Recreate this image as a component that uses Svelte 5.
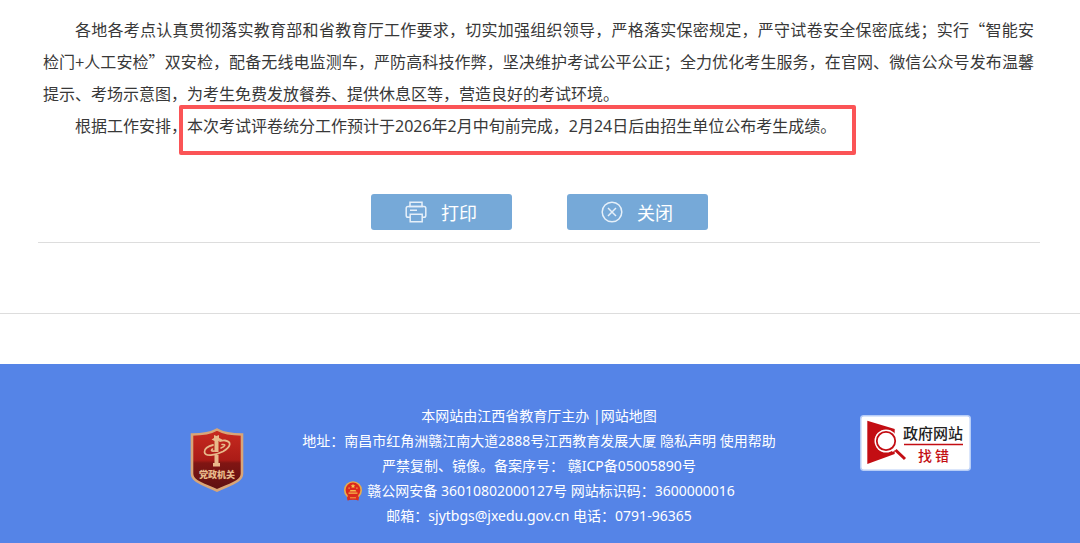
<script>
  const contacts = [
    '地址：南昌市红角洲赣江南大道2888号江西教育发展大厦 ',
    '严禁复制、镜像。备案序号： ',
  ];

  function printPage() {
    window.print();
  }

  function closePage() {
    window.close();
  }
</script>

<main class="article">
  <div class="article-text">
    <p>
      各地各考点认真贯彻落实教育部和省教育厅工作要求，切实加强组织领导，严格落实保密规定，严守试卷安全保密底线；实行“智能安检门+人工安检”双安检，配备无线电监测车，严防高科技作弊，坚决维护考试公平公正；全力优化考生服务，在官网、微信公众号发布温馨提示、考场示意图，为考生免费发放餐券、提供休息区等，营造良好的考试环境。
    </p>
    <p>
      根据工作安排，<span class="marked">本次考试评卷统分工作预计于2026年2月中旬前完成，2月24日后由招生单位公布考生成绩。</span>
    </p>
  </div>

  <div class="actions">
    <button type="button" onclick={printPage}>
      <svg viewBox="0 0 22 22" width="22" height="22" aria-hidden="true">
        <path d="M5 5.500V1.200h12v4.300M5 16.200H3a1.800 1.800 0 0 1-1.800-1.800V7.300A1.800 1.800 0 0 1 3 5.500h16a1.800 1.800 0 0 1 1.800 1.800v7.100a1.800 1.800 0 0 1-1.800 1.800h-2" />
        <path d="M4 5.500h14M5.200 13.200h12v7.600h-12zM5 9.300h7" />
      </svg>
      打印
    </button>
    <button type="button" onclick={closePage}>
      <svg viewBox="0 0 22 22" width="22" height="22" aria-hidden="true">
        <circle cx="11" cy="11" r="9.800" />
        <path d="M7 7l8 8M15 7l-8 8" />
      </svg>
      关闭
    </button>
  </div>
</main>

<hr />

<footer>
  <a class="emblem" href="#organ" aria-label="党政机关">
    <svg viewBox="0 0 54 64" width="54" height="64">
      <defs>
        <linearGradient id="shield" x1="0" y1="0" x2="0" y2="1">
          <stop offset="0" stop-color="#c92a20" />
          <stop offset="0.5" stop-color="#ab1c17" />
          <stop offset="0.55" stop-color="#801513" />
          <stop offset="1" stop-color="#5c1011" />
        </linearGradient>
      </defs>
      <path
        d="M27 1.500C21 5 12 6.500 2 6.500v39C2 54 15 56.500 27 62.500 39 56.500 52 54 52 45.500v-39C42 6.500 33 5 27 1.500z"
        fill="url(#shield)"
        stroke="#d9a577"
        stroke-width="2.600"
      />
      <path d="M24 7l2.500 1L29 7v3l3.500 1.500-4 1.500v11h-4V13l-3-1.500L24 10z" fill="#e8b98b" />
      <path d="M24.500 27h4v8h1.500v3.500h-7V35h1.500z" fill="#e8b98b" />
      <path
        d="M23 17c-5 1-9 4-8.500 7 .5 5 10.500 3.500 18.500-.5 8-4.500 9-10 2-11-2-.2-3.500.2-5 .5"
        fill="none"
        stroke="#e8b98b"
        stroke-width="1.800"
        stroke-linecap="round"
      />
      <path
        d="M22.500 21c-2 1.500-1 2.500 2 2M31 20c4-1.500 5.500-4 1-3.500"
        fill="none"
        stroke="#e8b98b"
        stroke-width="1.600"
        stroke-linecap="round"
      />
      <text x="27" y="50" text-anchor="middle" font-size="9" font-weight="900" fill="#e8b98b">党政机关</text>
    </svg>
  </a>

  <address>
    <p>本网站由江西省教育厅主办 |<a href="#map">网站地图</a></p>
    <p>{contacts[0]}<a href="#privacy">隐私声明</a> <a href="#help">使用帮助</a></p>
    <p>{contacts[1]}<a href="#icp">赣ICP备05005890号</a></p>
    <p class="police">
      <svg viewBox="0 0 20 20" width="20" height="20" aria-hidden="true">
        <path d="M3.500 13h13l-1 6.500-3-.8h-5l-3 .8z" fill="#dc2d1e" />
        <circle cx="10" cy="9.200" r="9" fill="#e8ad4b" />
        <circle cx="10" cy="9" r="7.400" fill="#dc281c" />
        <path d="M10 2.700l.7 1.500 1.600.2-1.200 1.100.3 1.600-1.400-.8-1.400.8.3-1.600-1.200-1.100 1.600-.2z" fill="#f6c54f" />
        <path d="M5.500 6.500h1.200v1.200H5.500zM13.300 6.500h1.200v1.200h-1.200zM7.500 9h5l1 1.500h-7zM5.500 11.500h9v1.200h-9z" fill="#f6b94a" />
        <path d="M4.500 14.500c3 1.500 8 1.500 11 0l-.6 4.800-2.400-.8h-5l-2.400.8z" fill="#dc2d1e" />
        <path d="M7 16.300h6v1H7z" fill="#f3a63e" />
      </svg>
      <span><a href="#police">赣公网安备 36010802000127号</a> 网站标识码：3600000016</span>
    </p>
    <p>邮箱：sjytbgs@jxedu.gov.cn 电话：0791-96365</p>
  </address>

  <a class="report" href="#report" aria-label="政府网站找错">
    <svg viewBox="0 0 111 56" width="111" height="56">
      <rect x="0.750" y="0.750" width="109.500" height="54.500" rx="3" fill="#fff" stroke="#b7cdf7" stroke-width="1.500" />
      <path d="M7.300 5.700L34.700 14v25L7.300 49z" fill="#c30d13" />
      <circle cx="26" cy="26" r="11.500" fill="#fff" />
      <path d="M32 32l3 3" stroke="#fff" stroke-width="6" />
      <circle cx="26" cy="26" r="9.200" fill="none" stroke="#c30d13" stroke-width="1.800" />
      <path d="M35.500 35l9.500 9" stroke="#c30d13" stroke-width="3" />
      <path d="M44 29.500h59" stroke="#c30d13" stroke-width="1.300" />
      <text x="43" y="24" font-size="15" font-weight="500" fill="#222">政府网站</text>
      <text x="58" y="46" font-size="14" font-weight="500" fill="#c30d13">找</text>
      <text x="75" y="46" font-size="14" font-weight="500" fill="#c30d13">错</text>
    </svg>
  </a>
</footer>

<style>
  :global(body) {
    margin: 0;
    background: #fff;
    font-family: 'Noto Sans CJK SC', sans-serif;
  }

  .article {
    margin: 0 40px 0 38px;
    padding-top: 13px;
    border-bottom: 1px solid #ddd;
  }

  .article-text {
    padding: 0 6px 0 5px;
    font-size: 16px;
    line-height: 32px;
    color: #383838;
    text-align: justify;
  }

  p {
    margin: 0;
  }

  .article-text p {
    text-indent: 2em;
  }

  .marked {
    position: relative;
    font-family: 'Noto Sans', 'Noto Sans CJK SC', sans-serif;
  }

  .marked::after {
    content: '';
    position: absolute;
    top: -10px;
    right: -20px;
    bottom: -18px;
    left: -8px;
    border: 4px solid #fb5456;
    border-radius: 2px;
  }

  .actions {
    display: flex;
    justify-content: center;
    gap: 55px;
    padding: 52px 0 12px;
  }

  button {
    display: flex;
    align-items: center;
    justify-content: center;
    gap: 14px;
    width: 141px;
    height: 36px;
    padding: 0;
    border: 0;
    border-radius: 3px;
    background: #76a9d8;
    color: #fff;
    font-family: inherit;
    font-size: 18px;
    line-height: 36px;
    cursor: pointer;
  }

  button svg {
    fill: none;
    stroke: #e6f0f9;
    stroke-width: 1.5;
  }

  hr {
    margin: 70px 0 50px;
    border: 0;
    border-top: 1px solid #ddd;
  }

  footer {
    display: grid;
    grid-template-columns: 1fr auto 1fr;
    padding: 39px 40px 15px 38px;
    background: #5584e7;
    color: #fff;
  }

  address {
    font-family: 'Noto Sans', 'Noto Sans CJK SC', sans-serif;
    font-size: 14px;
    font-style: normal;
    line-height: 25px;
    text-align: center;
    white-space: nowrap;
  }

  footer a {
    color: inherit;
    text-decoration: none;
  }

  footer svg {
    display: block;
  }

  .police {
    display: flex;
    align-items: center;
    justify-content: center;
    gap: 4px;
  }

  .emblem {
    justify-self: end;
    margin: 25px 58px 0 0;
  }

  .report {
    justify-self: start;
    margin: 12px 0 0 84px;
  }
</style>
